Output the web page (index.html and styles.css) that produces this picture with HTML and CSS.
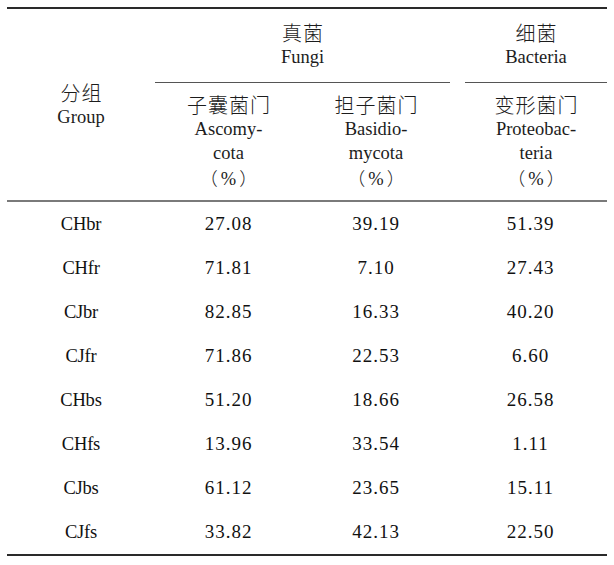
FILE: index.html
```html
<!DOCTYPE html>
<html lang="zh">
<head>
<meta charset="utf-8">
<title>Table</title>
<link rel="stylesheet" href="styles.css">
</head>
<body>
<table class="tbl">
  <colgroup>
    <col class="c1"><col class="c2"><col class="c3"><col class="c4">
  </colgroup>
  <thead>
    <tr class="h1">
      <th rowspan="2" class="grp"><div class="l zh">分组</div><div class="l">Group</div></th>
      <th colspan="2" class="fungi"><div class="l zh">真菌</div><div class="l">Fungi</div></th>
      <th class="bact"><div class="bact-in"><div class="l zh">细菌</div><div class="l">Bacteria</div></div></th>
    </tr>
    <tr class="h2">
      <th><div class="l zh">子囊菌门</div><div class="l">Ascomy-</div><div class="l">cota</div><div class="l"><span class="p">（</span><span class="pc">%</span><span class="p">）</span></div></th>
      <th><div class="l zh">担子菌门</div><div class="l">Basidio-</div><div class="l">mycota</div><div class="l"><span class="p">（</span><span class="pc">%</span><span class="p">）</span></div></th>
      <th class="b2"><div class="l zh">变形菌门</div><div class="l">Proteobac-</div><div class="l">teria</div><div class="l"><span class="p">（</span><span class="pc">%</span><span class="p">）</span></div></th>
    </tr>
  </thead>
  <tbody>
    <tr><td class="g">CHbr</td><td>27.08</td><td>39.19</td><td class="d4">51.39</td></tr>
    <tr><td class="g">CHfr</td><td>71.81</td><td>7.10</td><td class="d4">27.43</td></tr>
    <tr><td class="g">CJbr</td><td>82.85</td><td>16.33</td><td class="d4">40.20</td></tr>
    <tr><td class="g">CJfr</td><td>71.86</td><td>22.53</td><td class="d4">6.60</td></tr>
    <tr><td class="g">CHbs</td><td>51.20</td><td>18.66</td><td class="d4">26.58</td></tr>
    <tr><td class="g">CHfs</td><td>13.96</td><td>33.54</td><td class="d4">1.11</td></tr>
    <tr><td class="g">CJbs</td><td>61.12</td><td>23.65</td><td class="d4">15.11</td></tr>
    <tr><td class="g">CJfs</td><td>33.82</td><td>42.13</td><td class="d4">22.50</td></tr>
  </tbody>
</table>
</body>
</html>
```

FILE: styles.css
```css
html, body {
  margin: 0;
  padding: 0;
  background: #ffffff;
}

body {
  font-family: "Liberation Serif", "Times New Roman", serif;
  color: #1c1c1c;
}

.tbl {
  margin: 7px 0 0 7px;
  width: 600px;
  border-collapse: separate;
  border-spacing: 0;
  table-layout: fixed;
  border-top: 2px solid #2a2a2a;
  border-bottom: 2px solid #2a2a2a;
}

.c1 { width: 148px; }
.c2 { width: 147px; }
.c3 { width: 148px; }
.c4 { width: 157px; }

th {
  font-weight: normal;
  font-size: 18.5px;
  text-align: center;
  vertical-align: middle;
  padding: 0;
}

.l {
  height: 24px;
  line-height: 24px;
  white-space: nowrap;
}

.zh {
  font-family: "Noto Sans CJK SC", sans-serif;
  font-size: 20px;
  font-weight: 300;
  letter-spacing: 1px;
  text-indent: 1px;
}

.p {
  font-family: "Noto Sans CJK SC", sans-serif;
  font-size: 18px;
  font-weight: 300;
}

.pc {
  padding: 0 3px;
}

.grp {
  border-bottom: 2px solid #7a7a7a;
}

.h1 .fungi {
  padding: 12px 0 13px;
  border-bottom: 1px solid #555555;
}

.h1 .bact {
  padding-left: 15px;
  vertical-align: bottom;
}

.bact-in {
  padding: 12px 0 13px;
  border-bottom: 1px solid #555555;
}

.h2 th {
  padding: 10px 0 11px;
  border-bottom: 2px solid #7a7a7a;
}

.h2 .b2 {
  padding-left: 15px;
}

td {
  height: 44px;
  padding: 0;
  line-height: 44px;
  text-align: center;
  vertical-align: middle;
  font-size: 19px;
  letter-spacing: 1px;
  color: #111111;
}

td.g {
  font-size: 18.5px;
  letter-spacing: -0.2px;
}

td.d4 {
  padding-left: 4px;
}
```
